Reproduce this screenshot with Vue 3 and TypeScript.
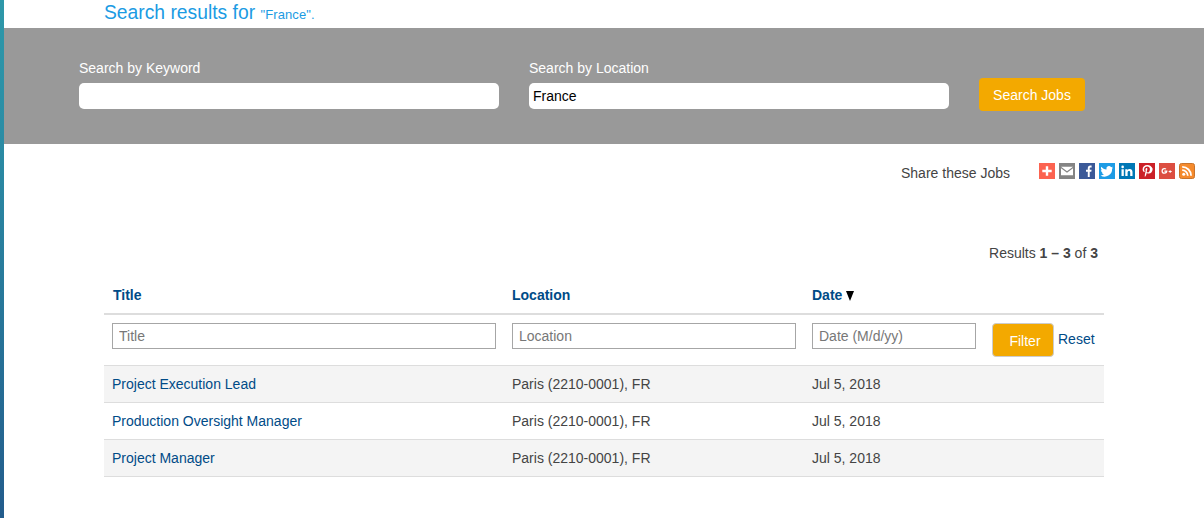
<script setup lang="ts">
const rows = [
  { title: 'Project Execution Lead', location: 'Paris (2210-0001), FR', date: 'Jul 5, 2018' },
  { title: 'Production Oversight Manager', location: 'Paris (2210-0001), FR', date: 'Jul 5, 2018' },
  { title: 'Project Manager', location: 'Paris (2210-0001), FR', date: 'Jul 5, 2018' },
]
</script>

<template>
  <div class="page">
    <div class="main">
      <h1 class="heading">Search results for <small>"France".</small></h1>
      <section class="band">
        <div class="field">
          <label>Search by Keyword</label>
          <input class="search" type="text" />
        </div>
        <div class="field">
          <label>Search by Location</label>
          <input class="search" type="text" value="France" />
        </div>
        <button class="search-btn">Search Jobs</button>
      </section>

      <div class="share">
        <span class="share-label">Share these Jobs</span>
        <div class="icons">
          <svg viewBox="0 0 16 16" style="background:#fc6350"><path d="M6.800 3.300h2.400v3.500h3.500v2.400h-3.500v3.500h-2.400v-3.500h-3.500v-2.400h3.500z" fill="#fff"/></svg>
          <svg viewBox="0 0 16 16" style="background:#848484"><path d="M2 3.800h12L8 8.300z M2 5.300V12.300h12V5.300L8 9.800z" fill="#fff"/></svg>
          <svg viewBox="0 0 16 16" style="background:#3b5998"><path d="M8.800 14V8.800H7V6.700h1.800V5.200C8.800 3.500 9.800 2.600 11.300 2.600h1.300v2H11.600c-.7 0-.9.400-.9 1v1.100h1.900l-.3 2.100h-1.600V14z" fill="#fff"/></svg>
          <svg viewBox="0 0 16 16" style="background:#1d9ce5"><path d="M14 4.400c-.5.200-1 .4-1.500.4.500-.3 1-.8 1.200-1.400-.5.300-1.100.5-1.700.6a2.600 2.600 0 0 0-4.500 2.400C5.400 6.300 3.500 5.300 2.300 3.700c-.7 1.200-.3 2.700.8 3.500-.4 0-.8-.1-1.200-.3 0 1.300.9 2.400 2.100 2.600-.4.100-.8.100-1.200 0 .3 1 1.300 1.800 2.400 1.800A5.300 5.300 0 0 1 1.500 12.400 7.500 7.500 0 0 0 13.100 5.700c.4-.3.700-.8.900-1.300z" fill="#fff"/></svg>
          <svg viewBox="0 0 16 16" style="background:#0077b5"><path d="M2.500 6.200h2.300V13H2.500z M3.650 2.600a1.300 1.300 0 1 1 0 2.600 1.300 1.300 0 0 1 0-2.600z M6.300 6.200h2.200v1c.4-.7 1.200-1.200 2.300-1.200 2 0 2.700 1.300 2.700 3.200V13h-2.300V9.600c0-.9-.3-1.600-1.200-1.600s-1.400.7-1.400 1.600V13H6.300z" fill="#fff"/></svg>
          <svg viewBox="0 0 16 16" style="background:#cb2027"><path d="M8.300 2C5.500 2 3.600 3.900 3.600 6.200c0 1.300.6 2.500 1.600 2.900.3.100.4-.5.500-.8 0-.2-.6-.7-.6-1.700 0-1.700 1.300-3 3.100-3 1.600 0 2.700 1 2.700 2.600 0 1.800-.9 3.200-2.100 3.200-.7 0-1.200-.6-1-1.200.2-.8.6-1.700.6-2.300 0-1.300-1.900-1.200-1.900.7 0 .6.200 1 .2 1L5.900 11.500c-.2 1-.1 2.200 0 2.500.5-.5 1.200-1.600 1.400-2.400l.5-1.900c.3.500 1.100.9 1.900.9 2.400 0 4-2.200 4-4.800C12.700 3.700 10.800 2 8.300 2z" fill="#fff"/></svg>
          <svg viewBox="0 0 16 16" style="background:#dc4e41"><path d="M6 7.300h3c.2 2-1 3.300-3 3.300a2.900 2.900 0 0 1 0-5.800c.8 0 1.500.3 2 .7l-.8.9c-.9-.7-2.800-.3-2.800 1.300 0 1.600 2.100 2.300 3 .9H6z M11.300 7h.9v.9h1.100v.9h-1.100v1h-.9v-1h-1v-.9h1z" fill="#fff" transform="translate(-.6 .2)"/></svg>
          <svg viewBox="0 0 16 16" class="rss"><rect x=".5" y=".5" width="15" height="15" rx="2" fill="#f58a2c" stroke="#c8742c"/><circle cx="4.700" cy="11.300" r="1.500" fill="#fff"/><path d="M3.200 7.200a5.600 5.600 0 0 1 5.600 5.600M3.200 3.900a8.900 8.900 0 0 1 8.900 8.900" fill="none" stroke="#fff" stroke-width="1.800"/></svg>
        </div>
      </div>

      <div class="results">Results <b>1 – 3</b> of <b>3</b></div>

      <div class="table">
        <div class="row head">
          <div class="c1"><a class="title-link">Title</a></div>
          <div class="c2"><a>Location</a></div>
          <div class="c3 date-head"><a>Date</a><i class="arrow"></i></div>
        </div>
        <div class="row filter">
          <div class="c1"><input class="flt" placeholder="Title" /></div>
          <div class="c2"><input class="flt" placeholder="Location" /></div>
          <div class="c3"><input class="flt" placeholder="Date (M/d/yy)" /></div>
          <div class="c4">
            <button class="filter-btn">Filter</button>
            <a class="reset">Reset</a>
          </div>
        </div>
        <div v-for="(r, i) in rows" :key="r.title" class="row data" :class="{ odd: i % 2 === 0 }">
          <div class="c1"><a>{{ r.title }}</a></div>
          <div class="c2">{{ r.location }}</div>
          <div class="c3">{{ r.date }}</div>
        </div>
      </div>
    </div>
  </div>
</template>

<style>
html, body { margin: 0; background: #fff; overflow: hidden; }
</style>

<style scoped>
.page {
  height: 518px;
  box-sizing: border-box;
  padding-left: 4px;
  background: linear-gradient(180deg, #2e98a9 0, #2b8da5 130px, #235c8c 518px) no-repeat left top / 4px 518px;
  font-family: "Liberation Sans", Arial, sans-serif;
  font-size: 14px;
  color: #333;
}
.main { background: #fff; height: 518px; }
.heading {
  margin: 0;
  height: 28px;
  box-sizing: border-box;
  padding: 2px 0 0 100px;
  font-size: 19.300px;
  line-height: 22px;
  font-weight: 400;
  color: #1b9be3;
}
.heading small { font-size: 13px; letter-spacing: 0.1px; }
.band {
  height: 116px;
  box-sizing: border-box;
  background: #999;
  padding: 32px 0 0 75px;
  display: flex;
  align-items: flex-start;
  gap: 30px;
}
.field { width: 420px; display: flex; flex-direction: column; }
.field label { color: #fff; font-size: 14px; line-height: 16px; margin-bottom: 7px; }
.search {
  height: 26px;
  box-sizing: border-box;
  border: 0;
  border-radius: 5px;
  background: #fff;
  padding: 0 4px;
  font: 14px "Liberation Sans", Arial, sans-serif;
  color: #000;
  outline: none;
}
.search-btn {
  margin-top: 18px;
  width: 106px;
  height: 33px;
  border: 0;
  border-radius: 4px;
  background: #f3a900;
  color: #fff;
  font: 14px "Liberation Sans", Arial, sans-serif;
  padding: 0;
}
.share {
  display: flex;
  align-items: flex-start;
  height: 16px;
  margin-top: 19px;
  padding-left: 897px;
}
.share-label { width: 138px; font-size: 14px; line-height: 16px; margin-top: 2px; color: #444; }
.icons { display: flex; gap: 4px; }
.icons svg { width: 16px; height: 16px; display: block; }
.results {
  margin-top: 66px;
  height: 16px;
  line-height: 16px;
  padding-right: 106px;
  text-align: right;
  font-size: 14px;
  color: #444;
}
.table { margin: 16px 0 0 100px; width: 1000px; }
.row { display: flex; align-items: stretch; }
.c1 { width: 400px; padding-left: 8px; box-sizing: border-box; }
.c2 { width: 300px; padding-left: 8px; box-sizing: border-box; }
.c3 { width: 180px; padding-left: 8px; box-sizing: border-box; }
.c4 { width: 120px; box-sizing: border-box; padding-left: 8px; display: flex; align-items: flex-start; gap: 4px; }
.head {
  height: 36px;
  border-bottom: 2px solid #ddd;
  align-items: center;
  font-weight: 700;
}
.head a { color: #004b87; }
.title-link { margin-left: 1px; }
.date-head { display: flex; align-items: center; }
.arrow {
  width: 0;
  height: 0;
  margin: 2px 0 0 4px;
  border-left: 4.500px solid transparent;
  border-right: 4.500px solid transparent;
  border-top: 10px solid #000;
}
.filter { height: 51px; box-sizing: border-box; border-bottom: 1px solid #ddd; padding-top: 8px; }
.flt {
  height: 26px;
  box-sizing: border-box;
  width: 100%;
  border: 1px solid #a6a6a6;
  background: #fff;
  padding: 0 6px;
  font: 14px "Liberation Sans", Arial, sans-serif;
  outline: none;
  display: block;
}
.c1 .flt { width: 384px; }
.c2 .flt { width: 284px; }
.c3 .flt { width: 164px; }
.flt::placeholder { color: #777; opacity: 1; }
.filter-btn {
  width: 62px;
  height: 34px;
  border: 1px solid #ccc;
  border-radius: 4px;
  background: #f3a900;
  color: #fff;
  font: 14px "Liberation Sans", Arial, sans-serif;
  padding: 2px 0 0 4px;
}
.reset { color: #004b87; font-size: 14px; line-height: 16px; margin-top: 8px; }
.data {
  height: 37px;
  box-sizing: border-box;
  border-bottom: 1px solid #ddd;
  align-items: center;
  font-size: 14px;
  color: #444;
}
.data a { color: #004b87; }
.odd { background: #f4f4f4; }
</style>
